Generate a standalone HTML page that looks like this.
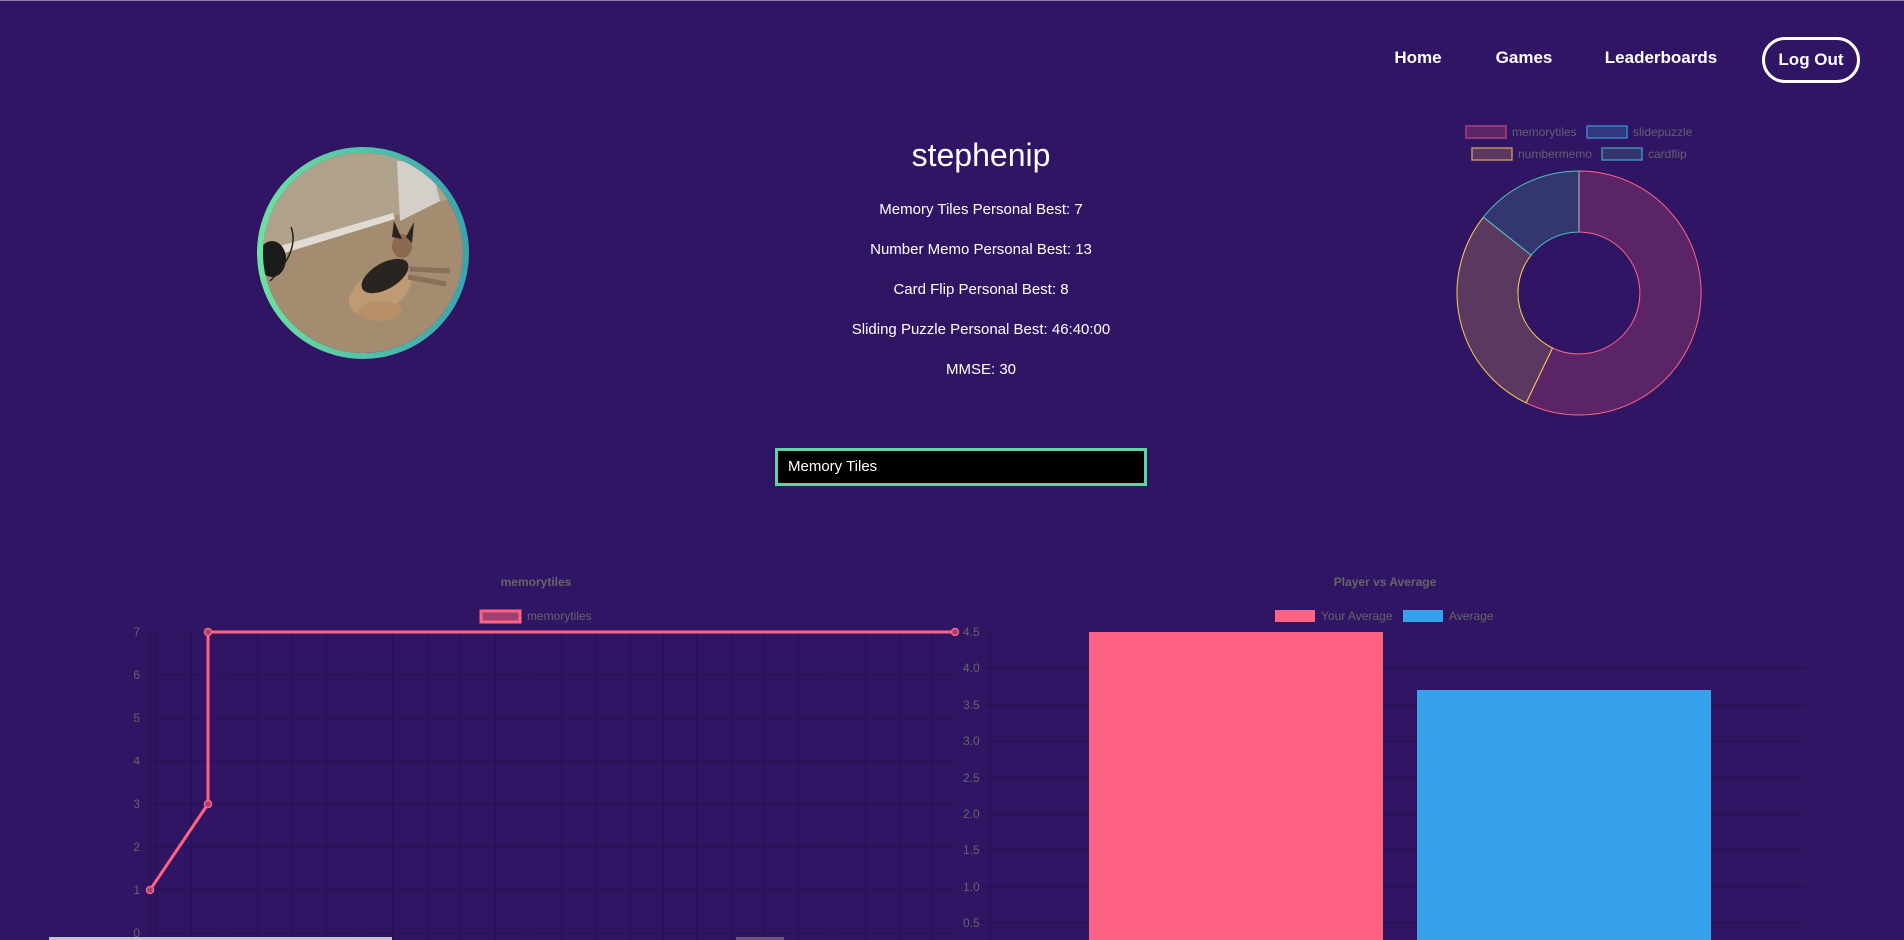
<!DOCTYPE html>
<html><head><meta charset="utf-8">
<style>
html,body{margin:0;padding:0;}
body{width:1904px;height:939px;overflow:hidden;background:#2f1563;font-family:"Liberation Sans",sans-serif;position:relative;border-top:1px solid #8a80a0;box-sizing:border-box;}
.nav{position:absolute;top:0;left:0;width:1904px;}
.nav a{position:absolute;top:47px;color:#fff;font-weight:bold;font-size:17px;text-decoration:none;transform:translateX(-50%);}
.logout{position:absolute;left:1762px;top:36px;width:92px;height:40px;border:3px solid #fff;border-radius:24px;color:#fff;font-weight:bold;font-size:17px;line-height:40px;text-align:center;}
.name{position:absolute;left:781px;width:400px;text-align:center;top:136px;font-size:32px;color:#fff;}
.stat{position:absolute;left:731px;width:500px;text-align:center;font-size:15px;color:#fff;}
.sel{position:absolute;left:775px;top:447px;height:32px;background:#000;border:3px solid #5fd3a0;color:#fff;font-size:15px;line-height:32px;padding-left:10px;width:356px;}
svg{position:absolute;left:0;top:0;}
</style></head><body>
<div class="nav">
<a style="left:1418px">Home</a>
<a style="left:1524px">Games</a>
<a style="left:1661px">Leaderboards</a>
<div class="logout">Log Out</div>
</div>
<div class="name">stephenip</div>
<div class="stat" style="top:200px">Memory Tiles Personal Best: 7</div>
<div class="stat" style="top:240px">Number Memo Personal Best: 13</div>
<div class="stat" style="top:280px">Card Flip Personal Best: 8</div>
<div class="stat" style="top:320px">Sliding Puzzle Personal Best: 46:40:00</div>
<div class="stat" style="top:360px">MMSE: 30</div>
<div class="sel">Memory Tiles</div>

<svg width="1904" height="939" viewBox="0 0 1904 939" font-family="Liberation Sans, sans-serif">
<defs>
<linearGradient id="rg" x1="0" y1="0" x2="1" y2="0"><stop offset="0" stop-color="#6fe0a0"/><stop offset="1" stop-color="#3aa4b0"/></linearGradient>
<clipPath id="cp"><circle cx="363" cy="252" r="100"/></clipPath>
</defs>
<!-- profile -->
<circle cx="363" cy="252" r="103" fill="none" stroke="url(#rg)" stroke-width="6"/>
<g clip-path="url(#cp)">
<rect x="250" y="140" width="230" height="230" fill="#a48c70"/>
<polygon points="250,140 480,140 480,195 440,200 393,215 263,252 250,256" fill="#b0a28a"/>
<polygon points="397,160 430,160 440,200 400,220" fill="#d4cfc8"/>
<polygon points="263,250 393,212 395,218 265,258" fill="#e0dcd4"/>
<ellipse cx="272" cy="258" rx="14" ry="18" fill="#1a1a1a"/>
<path d="M291,226 Q300,250 270,280" stroke="#222" stroke-width="1.5" fill="none"/>
<ellipse cx="380" cy="290" rx="34" ry="20" fill="#c09a72" transform="rotate(-30 380 290)"/>
<ellipse cx="385" cy="275" rx="26" ry="13" fill="#2a2420" transform="rotate(-30 385 275)"/>
<ellipse cx="380" cy="310" rx="22" ry="10" fill="#b89068"/>
<ellipse cx="402" cy="245" rx="10" ry="12" fill="#8a6a50"/>
<polygon points="392,236 394,220 402,238" fill="#2a2420"/>
<polygon points="406,236 414,221 412,242" fill="#2a2420"/>
<line x1="410" y1="268" x2="450" y2="270" stroke="#8a7058" stroke-width="5"/>
<line x1="408" y1="276" x2="446" y2="283" stroke="#8a7058" stroke-width="5"/>
</g>
<!-- donut -->
<path d="M1579,170 A122,122 0 1 1 1526.1,401.9 L1552.5,347 A61,61 0 1 0 1579,231 Z" fill="#5a2466" stroke="#ff6384" stroke-width="1"/>
<path d="M1526.1,401.9 A122,122 0 0 1 1483.4,216.2 L1531.2,254.1 A61,61 0 0 0 1552.5,347 Z" fill="#5b3860" stroke="#ffce56" stroke-width="1"/>
<path d="M1483.4,216.2 A122,122 0 0 1 1579,170 L1579,231 A61,61 0 0 0 1531.2,254.1 Z" fill="#34366f" stroke="#4bc0c0" stroke-width="1"/>
<line x1="1579" y1="170" x2="1579" y2="231" stroke="#8a90a8" stroke-width="1.5"/>
<g font-size="12" fill="#646070">
<rect x="1466" y="125" width="40" height="12" fill="#5a2466" stroke="#b04080" stroke-width="1.5"/><text x="1512" y="135">memorytiles</text>
<rect x="1587" y="125" width="40" height="12" fill="#303880" stroke="#3a80d0" stroke-width="1.5"/><text x="1633" y="135">slidepuzzle</text>
<rect x="1472" y="147" width="40" height="12" fill="#5b3860" stroke="#c09060" stroke-width="1.5"/><text x="1518" y="157">numbermemo</text>
<rect x="1602" y="147" width="40" height="12" fill="#34366f" stroke="#4090b0" stroke-width="1.5"/><text x="1648" y="157">cardflip</text>
</g>
<!-- line chart -->
<g stroke="#271152" stroke-width="1">
<line x1="150" y1="631" x2="955" y2="631"/><line x1="150" y1="674" x2="955" y2="674"/><line x1="150" y1="717" x2="955" y2="717"/><line x1="150" y1="760" x2="955" y2="760"/><line x1="150" y1="803" x2="955" y2="803"/><line x1="150" y1="846" x2="955" y2="846"/><line x1="150" y1="889" x2="955" y2="889"/><line x1="150" y1="932" x2="955" y2="932"/>
<line x1="150" y1="631" x2="150" y2="939"/><line x1="157" y1="631" x2="157" y2="939"/><line x1="191" y1="631" x2="191" y2="939"/><line x1="224" y1="631" x2="224" y2="939"/><line x1="258" y1="631" x2="258" y2="939"/><line x1="292" y1="631" x2="292" y2="939"/><line x1="326" y1="631" x2="326" y2="939"/><line x1="360" y1="631" x2="360" y2="939"/><line x1="393" y1="631" x2="393" y2="939"/><line x1="427" y1="631" x2="427" y2="939"/><line x1="461" y1="631" x2="461" y2="939"/><line x1="495" y1="631" x2="495" y2="939"/><line x1="528" y1="631" x2="528" y2="939"/><line x1="562" y1="631" x2="562" y2="939"/><line x1="596" y1="631" x2="596" y2="939"/><line x1="630" y1="631" x2="630" y2="939"/><line x1="663" y1="631" x2="663" y2="939"/><line x1="697" y1="631" x2="697" y2="939"/><line x1="731" y1="631" x2="731" y2="939"/><line x1="765" y1="631" x2="765" y2="939"/><line x1="798" y1="631" x2="798" y2="939"/><line x1="832" y1="631" x2="832" y2="939"/><line x1="866" y1="631" x2="866" y2="939"/><line x1="900" y1="631" x2="900" y2="939"/><line x1="932" y1="631" x2="932" y2="939"/>
</g>
<g font-size="12" fill="#666" text-anchor="end">
<text x="140" y="635">7</text><text x="140" y="678">6</text><text x="140" y="721">5</text><text x="140" y="764">4</text><text x="140" y="807">3</text><text x="140" y="850">2</text><text x="140" y="893">1</text><text x="140" y="936">0</text>
</g>
<polyline points="150,889 208,803 208,631 955,631" fill="none" stroke="#ff6384" stroke-width="3"/>
<circle cx="150" cy="889" r="3.5" fill="#a04070" stroke="#ff6384" stroke-width="1.5"/>
<circle cx="208" cy="803" r="3.5" fill="#a04070" stroke="#ff6384" stroke-width="1.5"/>
<circle cx="208" cy="631" r="3.5" fill="#a04070" stroke="#ff6384" stroke-width="1.5"/>
<circle cx="955" cy="631" r="3.5" fill="#a04070" stroke="#ff6384" stroke-width="1.5"/>
<text x="536" y="585" font-size="12" font-weight="bold" fill="#666" text-anchor="middle">memorytiles</text>
<rect x="481" y="610" width="39" height="11" fill="#a04070" stroke="#ff6384" stroke-width="3"/>
<text x="527" y="619" font-size="12" fill="#666">memorytiles</text>
<!-- bar chart -->
<g stroke="#271152" stroke-width="1">
<line x1="982" y1="631" x2="1807" y2="631"/><line x1="982" y1="667" x2="1807" y2="667"/><line x1="982" y1="704" x2="1807" y2="704"/><line x1="982" y1="740" x2="1807" y2="740"/><line x1="982" y1="777" x2="1807" y2="777"/><line x1="982" y1="813" x2="1807" y2="813"/><line x1="982" y1="849" x2="1807" y2="849"/><line x1="982" y1="886" x2="1807" y2="886"/><line x1="982" y1="922" x2="1807" y2="922"/>
<line x1="990" y1="631" x2="990" y2="939"/>
</g>
<g font-size="12" fill="#666">
<text x="963" y="635">4.5</text><text x="963" y="671">4.0</text><text x="963" y="708">3.5</text><text x="963" y="744">3.0</text><text x="963" y="781">2.5</text><text x="963" y="817">2.0</text><text x="963" y="853">1.5</text><text x="963" y="890">1.0</text><text x="963" y="926">0.5</text>
</g>
<rect x="1089" y="631" width="294" height="308" fill="#ff6384"/>
<rect x="1417" y="689" width="294" height="250" fill="#36a2eb"/>
<text x="1385" y="585" font-size="12" font-weight="bold" fill="#666" text-anchor="middle">Player vs Average</text>
<rect x="1275" y="609" width="40" height="12" fill="#ff6384"/>
<text x="1321" y="619" font-size="12" fill="#666">Your Average</text>
<rect x="1403" y="609" width="40" height="12" fill="#36a2eb"/>
<text x="1449" y="619" font-size="12" fill="#666">Average</text>
<!-- bottom bar -->
<rect x="49" y="936" width="343" height="3" fill="#c8c4cc"/>
<rect x="736" y="936" width="48" height="3" fill="#6a5a7a"/>
</svg>
</body></html>
